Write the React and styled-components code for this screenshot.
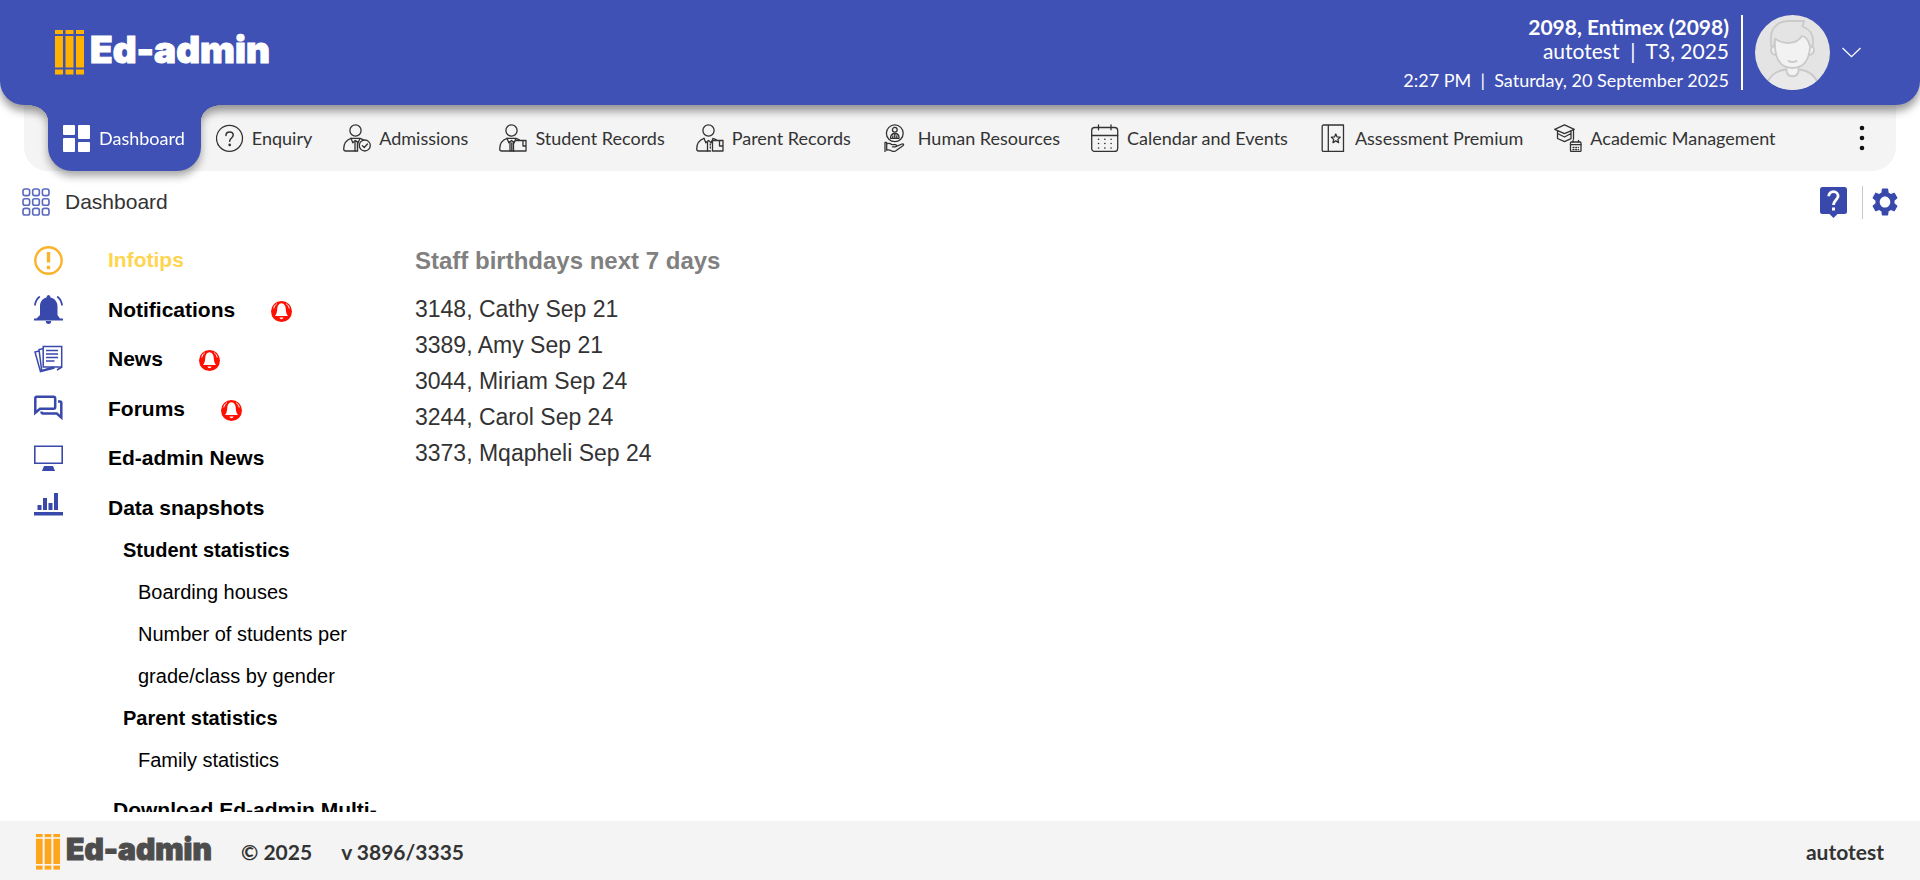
import React from 'react';
import styled, { createGlobalStyle, css } from 'styled-components';

const blue = '#3f51b5';
const ink = '#333333';
const panel = '#f4f4f4';

const GlobalStyle = createGlobalStyle`
  *, *::before, *::after { box-sizing: border-box; }
  body {
    margin: 0;
    background: #ffffff;
    color: ${ink};
    font-family: 'Liberation Sans', Arial, sans-serif;
  }
  a { color: inherit; text-decoration: none; }
  ul { list-style: none; margin: 0; padding: 0; }
`;

const Page = styled.div`
  display: flex;
  flex-direction: column;
  height: 100vh;
  overflow: hidden;
`;

const PlainButton = styled.button`
  display: flex;
  align-items: center;
  justify-content: center;
  padding: 0;
  border: 0;
  background: none;
  color: inherit;
  cursor: pointer;
`;

/* Header */

const Header = styled.header`
  position: relative;
  z-index: 2;
  flex: none;
  display: flex;
  align-items: center;
  justify-content: space-between;
  padding: 15px 59px 15px 55px;
  border-radius: 0 0 24px 24px;
  background: ${blue};
  color: #ffffff;
  font-family: Lato, sans-serif;
  box-shadow: 0 6px 9px rgba(0, 0, 0, 0.4);
`;

const Brand = styled.a`
  display: flex;
  align-items: center;
  gap: 6px;
  font: 900 ${(p) => (p.$small ? 30 : 37)}px / 1 Inter, sans-serif;
  color: ${(p) => (p.$small ? '#4d4d4d' : '#ffffff')};
`;

const BrandName = styled.span`
  padding-bottom: 6px;
  -webkit-text-stroke: 1px currentColor;
`;

const Account = styled.div`
  display: flex;
  align-items: center;
`;

const AccountText = styled.div`
  display: flex;
  flex-direction: column;
  align-items: flex-end;
  padding-right: 12px;
  margin-right: 12px;
  border-right: 2px solid #ffffff;
  height: 75px;
`;

const AccountLine = styled.div`
  font-size: ${(p) => (p.$minor ? 18 : 21)}px;
  font-weight: ${(p) => (p.$strong ? 700 : 400)};
  line-height: ${(p) => (p.$minor ? 35 : 24)}px;
  white-space: pre;
`;

const AvatarButton = styled(PlainButton)`
  gap: 12px;
`;

/* Navigation */

const Nav = styled.nav`
  flex: none;
  display: flex;
  align-items: stretch;
  justify-content: space-between;
  height: 66px;
  margin: 0 24px;
  padding: 0 24px;
  border-radius: 0 0 24px 24px;
  background: ${panel};
  font-family: Lato, sans-serif;
`;

const Tabs = styled.ul`
  display: flex;
`;

const activeTab = css`
  position: relative;
  z-index: 3;
  border-radius: 0 0 24px 24px;
  background: ${blue};
  color: #ffffff;
  filter: drop-shadow(0 5px 4px rgba(0, 0, 0, 0.35));
  clip-path: inset(0 -40px -24px -40px);

  &::before, &::after {
    content: '';
    position: absolute;
    top: 0;
    width: 20px;
    height: 15px;
  }
  &::before {
    right: 100%;
    background: radial-gradient(ellipse 20px 15px at 0 100%, transparent 98%, ${blue});
  }
  &::after {
    left: 100%;
    background: radial-gradient(ellipse 20px 15px at 100% 100%, transparent 98%, ${blue});
  }
`;

const Tab = styled.a`
  display: flex;
  align-items: center;
  gap: 8px;
  height: 100%;
  padding: 0 16px 0 15px;
  font-size: 18px;
  line-height: 24px;
  white-space: nowrap;
  ${(p) => p.$active && activeTab}
`;

const MoreButton = styled(PlainButton)`
  width: 20px;
  color: #111111;
`;

/* Breadcrumb */

const Toolbar = styled.div`
  flex: none;
  display: flex;
  align-items: center;
  justify-content: space-between;
  height: 62px;
  padding: 0 22px;
`;

const Title = styled.h1`
  display: flex;
  align-items: center;
  gap: 15px;
  margin: 0;
  font-size: 21px;
  line-height: 24px;
  font-weight: 400;
`;

const Tools = styled.div`
  display: flex;
  align-items: center;
  color: #3949ab;
`;

const ToolDivider = styled.span`
  width: 1px;
  height: 33px;
  margin: 0 9px 0 15px;
  background: #c8c8c8;
`;

/* Body */

const Body = styled.div`
  flex: 1;
  min-height: 0;
  display: flex;
  align-items: flex-start;
  gap: 15px;
  padding: 6px 24px 0;
  margin-bottom: 9px;
  overflow: hidden;
`;

const Sidebar = styled.nav`
  flex: none;
  width: 376px;
  color: #000000;
`;

const Topics = styled.ul`
  display: flex;
  flex-direction: column;
  justify-content: space-between;
  min-height: 290px;
`;

const Topic = styled.a`
  display: flex;
  align-items: center;
  height: 42px;
  padding-left: 10px;
  font-size: 21px;
  font-weight: 700;
  color: ${(p) => (p.$current ? '#ffd54f' : 'inherit')};
`;

const TopicIcon = styled.span`
  display: flex;
  width: 74px;
  color: ${(p) => (p.$current ? '#fbb32b' : '#3949ab')};
`;

const Alert = styled.span`
  display: flex;
  padding-top: 3px;
  margin-left: 36px;
`;

const SubTopics = styled.ul`
  padding-left: 99px;
  font-size: 20px;
  line-height: 42px;
`;

const SubHeading = styled.a`
  display: block;
  font-weight: 700;
`;

const SubLink = styled.a`
  display: block;
  max-width: 240px;
  padding-left: 15px;
`;

const Download = styled.a`
  display: block;
  margin-top: 8px;
  padding-left: 89px;
  font-size: 21px;
  font-weight: 700;
  line-height: 42px;
`;

const Content = styled.main`
  flex: 1;
`;

const SectionTitle = styled.h2`
  margin: 0 0 8px;
  font-size: 24px;
  line-height: 44px;
  color: #808080;
`;

const Birthday = styled.li`
  font-size: 23px;
  line-height: 36px;
`;

/* Footer */

const Footer = styled.footer`
  flex: none;
  display: flex;
  align-items: center;
  height: 59px;
  padding: 2px 36px 0;
  background: ${panel};
  font: 700 21px / 24px Lato, sans-serif;
`;

const FooterBrand = styled.div`
  width: 176px;
  margin-right: 29px;
`;

const Version = styled.span`
  margin-left: 29px;
  margin-right: auto;
`;

/* Drawings */

function Bars({ width, height, color }) {
  return (
    <svg width={width} height={height} viewBox="0 0 29 45" preserveAspectRatio="none" fill={color} aria-hidden="true">
      {[0, 10.5, 21].map((x) => (
        <g key={x}>
          <rect x={x} y="0" width="8" height="4" />
          <rect x={x} y="6" width="8" height="31.500" />
          <rect x={x} y="39.500" width="8" height="5" />
        </g>
      ))}
    </svg>
  );
}

function LineIcon({ children }) {
  return (
    <svg width="28" height="28" viewBox="0 0 28 28" fill="none" stroke="currentColor" strokeWidth="1.300" strokeLinecap="round" strokeLinejoin="round" aria-hidden="true">
      {children}
    </svg>
  );
}

function DashboardIcon() {
  return (
    <svg width="28" height="28" viewBox="0 0 28 28" fill="currentColor" aria-hidden="true">
      <rect x="0" y="1" width="12" height="10" rx="1" />
      <rect x="0" y="14" width="12" height="14" rx="1" />
      <rect x="15" y="1" width="12" height="14" rx="1" />
      <rect x="15" y="18" width="12" height="10" rx="1" />
    </svg>
  );
}

function EnquiryIcon() {
  return (
    <LineIcon>
      <circle cx="13.500" cy="14.300" r="13" />
      <path d="M10 11.500c0-2 1.500-3.400 3.600-3.400s3.600 1.400 3.600 3.200c0 2.600-3.500 2.900-3.500 5.900" strokeWidth="1.500" />
      <circle cx="13.700" cy="20.900" r="0.700" fill="currentColor" />
    </LineIcon>
  );
}

function PersonTop() {
  return (
    <>
      <circle cx="12.500" cy="6.500" r="5.600" />
      <path d="M8 14.300C3.500 15.800.8 20 .7 24.800c0 1.500.6 2.200 2 2.200h12" />
      <path d="M17 14.300c1.500.4 2.600 1 3.500 1.700M8 14.300l1.800 4.500 2.700-2.400 2.700 2.400 1.800-4.500" />
    </>
  );
}

function AdmissionsIcon() {
  return (
    <LineIcon>
      <PersonTop />
      <path d="M8 14.300h9M12 17v10M14.500 18v8.500" />
      <path d="M14.500 20v6" strokeDasharray="1 2" />
      <circle cx="21.800" cy="21.500" r="5.500" />
      <path d="M19.300 21.600l1.900 1.900 3.300-3.500" />
    </LineIcon>
  );
}

function StudentIcon() {
  return (
    <LineIcon>
      <PersonTop />
      <path d="M8 14.300h9M11 18v9M14.500 18v9M12.800 19v8" />
      <path d="M16.500 16.500H27V27H14.500M24 16.500v5.500h3" />
    </LineIcon>
  );
}

function ParentIcon() {
  return (
    <LineIcon>
      <PersonTop />
      <path d="M11.500 18v9" />
      <path d="M14.300 20v6" strokeDasharray="1 2" />
      <path d="M16.500 16.500H27V27H16.500zM23.500 16.500v5.500H27" />
    </LineIcon>
  );
}

function HumanResourcesIcon() {
  return (
    <LineIcon>
      <g transform="translate(2.500 0.300)">
        <circle cx="10.300" cy="9" r="8.400" />
        <circle cx="10.300" cy="5.500" r="2.400" />
        <path d="M6 14c0-3 1.500-4.800 4.300-4.800s4.300 1.800 4.300 4.800zM10.300 9.500V14M8.300 11.500v2M12.300 11.500v2" />
        <path d="M.5 18v9.500M2.200 18.500v7.500M.5 18h1.700M2.200 19.500c2-.9 3.600-.4 5 .8h3.800c1.300 0 1.300 2.300 0 2.300H8M11.300 22.300l6.200-2.600c1.600-.4 2 .8.900 1.700L11 26.700c-1.500.8-2.900.5-4.200-.3-1.500-.8-2.900-.9-4.600-.6" />
      </g>
    </LineIcon>
  );
}

function CalendarIcon() {
  return (
    <LineIcon>
      <rect x="0.700" y="3.500" width="26" height="24" rx="3" />
      <path d="M.7 11.500h26M7.500.8v5M20 .8v5" />
      <path d="M7.500 15.200h12.600M7.500 19.500h12.600M7.500 24h12.600" strokeWidth="1.600" strokeDasharray="0.100 6.200" />
    </LineIcon>
  );
}

function AssessmentIcon() {
  return (
    <LineIcon>
      <path d="M4.500 1h20v26.500h-20c-.8 0-1.300-.6-1.300-1.300V2.300C3.200 1.600 3.700 1 4.500 1zM9.300 1v26.500" />
      <path d="M16.800 10l1.300 2.900 3.100.3-2.300 2.200.7 3.200-2.800-1.700-2.800 1.700.7-3.200-2.300-2.200 3.100-.3z" />
    </LineIcon>
  );
}

function AcademicIcon() {
  return (
    <LineIcon>
      <path d="M.7 5.300L10.500.8l9.800 4.500-9.800 4.300zM3.500 7.300v7.200l7 3.200 6.500-3V7.300M3.500 9.500l7 3.500 6.500-3.500M19.500 5.800v9.500" />
      <rect x="16.500" y="18" width="10.500" height="9.500" rx="1" />
      <path d="M16.500 20.700H27M19 16.500V18M24.500 16.500V18" />
      <path d="M19 23.300h5.500M19 25.500h5.500" strokeDasharray="1 1.700" />
    </LineIcon>
  );
}

function Avatar() {
  return (
    <svg width="75" height="75" viewBox="0 0 75 75" fill="none" stroke="#cacaca" strokeWidth="1.800" strokeLinejoin="round" aria-hidden="true">
      <defs>
        <clipPath id="avatar-disc"><circle cx="37.500" cy="37.500" r="37.500" /></clipPath>
      </defs>
      <circle cx="37.500" cy="37.500" r="37.500" fill="#e4e4e4" stroke="none" />
      <g clipPath="url(#avatar-disc)">
        <path d="M12 68c4-9 11-13 20-13.500h11c9 .5 16 4.500 20 13.500v10H12z" fill="#e9e9e9" />
        <path d="M31.500 50v6c1 7 11 7 12 0v-6" fill="#f2f2f2" />
        <path d="M20 31c-5-.5-6 8 1 9M55 31c5-.5 6 8-1 9" fill="#efefef" />
        <path d="M20 23c-1 17 3 30 17.500 30S56 40 55 23c-9-6-26-6-35 0z" fill="#f2f2f2" />
        <path d="M16.500 32c-3-17 4-25.500 17-26H49l-1.500 5.500c8 3 12.500 9 10 20.500l-3-2c-1-5-4-8-7.500-9-5 8-18 9.500-27 2.500-.7 3-.8 5.500-1 7.500z" fill="#e4e4e4" />
        <path d="M33 45.500c2 2 7 2 9 0" />
      </g>
    </svg>
  );
}

function Chevron() {
  return (
    <svg width="19" height="11" viewBox="0 0 19 11" fill="none" stroke="#ffffff" strokeWidth="1.300" aria-hidden="true">
      <path d="M.5 1l9 8.700 9-8.700" />
    </svg>
  );
}

function MoreIcon() {
  return (
    <svg width="6" height="26" viewBox="0 0 6 26" fill="currentColor" aria-hidden="true">
      <circle cx="3" cy="3" r="2.300" />
      <circle cx="3" cy="13" r="2.300" />
      <circle cx="3" cy="23" r="2.300" />
    </svg>
  );
}

function GridIcon() {
  const cells = [1, 10.5, 20];
  return (
    <svg width="28" height="28" viewBox="0 0 27.500 27.500" fill="none" stroke="#5b69c0" strokeWidth="1.600" aria-hidden="true">
      {cells.map((y) => cells.map((x) => <rect key={`${x}-${y}`} x={x} y={y} width="6.500" height="6.500" rx="2" />))}
    </svg>
  );
}

function HelpIcon() {
  return (
    <svg width="27" height="31" viewBox="0 0 27 31" aria-hidden="true">
      <path d="M2.500 0h22A2.500 2.500 0 0 1 27 2.500v22a2.500 2.500 0 0 1-2.500 2.500h-7l-4 4-4-4h-7A2.500 2.500 0 0 1 0 24.500v-22A2.500 2.500 0 0 1 2.500 0z" fill="currentColor" />
      <path d="M8.700 9.300c0-2.800 2-4.600 4.700-4.600s4.700 1.800 4.700 4.400c0 3.800-4.600 4.300-4.600 8.900" fill="none" stroke="#fff" strokeWidth="2.800" />
      <rect x="12" y="20.500" width="3" height="3" fill="#fff" />
    </svg>
  );
}

function GearIcon() {
  return (
    <svg width="26" height="28" viewBox="2.200 2 19.600 20" preserveAspectRatio="none" fill="currentColor" aria-hidden="true">
      <path d="M19.140 12.940c.04-.3.060-.61.060-.94s-.02-.64-.07-.94l2.030-1.580c.18-.14.23-.41.120-.61l-1.920-3.320c-.12-.22-.37-.29-.59-.22l-2.390.96c-.5-.38-1.030-.7-1.620-.94L14.400 2.810c-.04-.24-.24-.41-.48-.41h-3.840c-.24 0-.43.170-.47.41l-.36 2.540c-.59.240-1.130.570-1.620.94l-2.390-.96c-.22-.08-.47 0-.59.220L2.740 8.870c-.12.210-.08.470.120.610l2.030 1.580c-.05.300-.09.630-.09.940s.02.640.07.940l-2.030 1.580c-.18.140-.23.410-.12.610l1.920 3.320c.12.220.37.290.59.220l2.390-.96c.5.380 1.030.700 1.620.94l.36 2.540c.05.240.24.410.48.410h3.840c.24 0 .44-.17.47-.41l.36-2.540c.59-.24 1.130-.56 1.620-.94l2.390.96c.22.080.47 0 .59-.22l1.920-3.320c.12-.22.070-.47-.12-.61l-2.010-1.580zM12 16.000c-2.200 0-4.000-1.800-4.000-4.000s1.800-4.000 4.000-4.000 4.000 1.800 4.000 4.000-1.800 4.000-4.000 4.000z" />
    </svg>
  );
}

function TopicSvg({ children }) {
  return (
    <svg width="29" height="29" viewBox="0 0 29 29" fill="none" stroke="currentColor" strokeWidth="2" aria-hidden="true">
      {children}
    </svg>
  );
}

const topicIcons = {
  info: (
    <TopicSvg>
      <circle cx="14.500" cy="14.500" r="13.200" strokeWidth="2.400" />
      <path d="M14.500 6v10.500M14.500 19.700v3.500" strokeWidth="3.400" />
    </TopicSvg>
  ),
  bell: (
    <TopicSvg>
      <g fill="currentColor" stroke="none">
        <path d="M12.500 2.500a2 2.500 0 0 1 4 0c4.500 1 7 4.500 7 9V20l2.500 3.500h3v2H0v-2h2.500L6 20v-8.500c0-4.500 2.300-8 6.500-9z" />
        <path d="M11.800 26h5.400a2.700 3 0 0 1-5.400 0z" />
      </g>
      <path d="M5.800 1.500C3 3.700 1.200 6.600 1 10.500M23.200 1.500c2.800 2.200 4.600 5.100 4.800 9" strokeWidth="1.700" />
    </TopicSvg>
  ),
  news: (
    <TopicSvg>
      <g strokeWidth="1.500">
        <path d="M9.200 1.500h18.500V22H9.200z" />
        <path d="M9 3.700l-4 .8 2.700 21 12-3.500M5 6l-4 1 5.500 19.700L20.500 23M23 25l5-3" />
        <path d="M12 5.500h12M12 9h12M12 12.500h12M12 16h8.500" />
      </g>
    </TopicSvg>
  ),
  forums: (
    <TopicSvg>
      <path d="M2.500 2.800h17c1.200 0 1.700.6 1.700 1.700V13c0 1.200-.6 1.800-1.700 1.800H6l-4.700 4V4.500c0-1.100.4-1.700 1.200-1.700z" strokeWidth="2.500" />
      <path d="M24 7.500h2c1 0 1.300.5 1.300 1.400v14.600l-4.500-4H9c-1 0-1.500-.6-1.500-2" strokeWidth="2.500" />
    </TopicSvg>
  ),
  monitor: (
    <TopicSvg>
      <path d="M.8 2.300h27.400v17H.8z" strokeWidth="1.600" />
      <path d="M10 22h9l2 5H8z" fill="currentColor" stroke="none" />
    </TopicSvg>
  ),
  chart: (
    <TopicSvg>
      <g fill="currentColor" stroke="none">
        <path d="M0 19h29v3.500H0zM3.500 12h4v5h-4zM9 5h4v12H9zM14.500 10h4v7h-4zM20 0h4v17h-4z" />
      </g>
    </TopicSvg>
  ),
};

function AlertIcon() {
  return (
    <svg width="21" height="21" viewBox="0 0 21 21" role="img" aria-label="New items">
      <circle cx="10.500" cy="10.500" r="10.500" fill="#ff0f00" />
      <path d="M10.500 2.300c2.700.4 4 2.500 4.200 5.200.2 3.500.7 5.300 2.300 7.500H4c1.600-2.200 2.100-4 2.300-7.500.2-2.700 1.500-4.800 4.200-5.200zM8.500 16.500h4c-.5 2.300-3.500 2.300-4 0z" fill="#fff" />
      <path d="M5.800 2.800C4 4 3 5.500 2.800 7.500M15.200 2.800C17 4 18 5.500 18.200 7.500" fill="none" stroke="#fff" strokeWidth="1" />
    </svg>
  );
}

/* Data */

const tabs = [
  ['Dashboard', DashboardIcon],
  ['Enquiry', EnquiryIcon],
  ['Admissions', AdmissionsIcon],
  ['Student Records', StudentIcon],
  ['Parent Records', ParentIcon],
  ['Human Resources', HumanResourcesIcon],
  ['Calendar and Events', CalendarIcon],
  ['Assessment Premium', AssessmentIcon],
  ['Academic Management', AcademicIcon],
];

const topics = [
  { label: 'Infotips', icon: 'info', current: true },
  { label: 'Notifications', icon: 'bell', alert: true },
  { label: 'News', icon: 'news', alert: true },
  { label: 'Forums', icon: 'forums', alert: true },
  { label: 'Ed-admin News', icon: 'monitor' },
  { label: 'Data snapshots', icon: 'chart' },
];

const statistics = [
  { label: 'Student statistics', links: ['Boarding houses', 'Number of students per grade/class by gender'] },
  { label: 'Parent statistics', links: ['Family statistics'] },
];

const birthdays = [
  '3148, Cathy Sep 21',
  '3389, Amy Sep 21',
  '3044, Miriam Sep 24',
  '3244, Carol Sep 24',
  '3373, Mqapheli Sep 24',
];

export default function App() {
  return (
    <Page>
      <GlobalStyle />
      <Header>
        <Brand href="#">
          <Bars width={29} height={45} color="#ffb300" />
          <BrandName>Ed-admin</BrandName>
        </Brand>
        <Account>
          <AccountText>
            <AccountLine $strong>2098, Entimex (2098)</AccountLine>
            <AccountLine>{'autotest  |  T3, 2025'}</AccountLine>
            <AccountLine $minor>{'2:27 PM  |  Saturday, 20 September 2025'}</AccountLine>
          </AccountText>
          <AvatarButton type="button" aria-label="Account menu">
            <Avatar />
            <Chevron />
          </AvatarButton>
        </Account>
      </Header>

      <Nav aria-label="Modules">
        <Tabs>
          {tabs.map(([label, Icon], i) => (
            <li key={label}>
              <Tab href="#" $active={i === 0} aria-current={i === 0 ? 'page' : undefined}>
                <Icon />
                {label}
              </Tab>
            </li>
          ))}
        </Tabs>
        <MoreButton type="button" aria-label="More modules">
          <MoreIcon />
        </MoreButton>
      </Nav>

      <Toolbar>
        <Title>
          <GridIcon />
          Dashboard
        </Title>
        <Tools>
          <PlainButton type="button" aria-label="Help"><HelpIcon /></PlainButton>
          <ToolDivider />
          <PlainButton type="button" aria-label="Settings"><GearIcon /></PlainButton>
        </Tools>
      </Toolbar>

      <Body>
        <Sidebar aria-label="Dashboard topics">
          <Topics>
            {topics.map(({ label, icon, alert, current }) => (
              <li key={label}>
                <Topic href="#" $current={current}>
                  <TopicIcon $current={current}>{topicIcons[icon]}</TopicIcon>
                  {label}
                  {alert && <Alert><AlertIcon /></Alert>}
                </Topic>
              </li>
            ))}
          </Topics>
          <SubTopics>
            {statistics.map(({ label, links }) => (
              <li key={label}>
                <SubHeading href="#">{label}</SubHeading>
                {links.map((link) => <SubLink href="#" key={link}>{link}</SubLink>)}
              </li>
            ))}
          </SubTopics>
          <Download href="#">Download Ed-admin Multi-</Download>
        </Sidebar>
        <Content>
          <SectionTitle>Staff birthdays next 7 days</SectionTitle>
          <ul>
            {birthdays.map((entry) => <Birthday key={entry}>{entry}</Birthday>)}
          </ul>
        </Content>
      </Body>

      <Footer>
        <FooterBrand>
          <Brand href="#" $small>
            <Bars width={24} height={36} color="#ffa51a" />
            <BrandName>Ed-admin</BrandName>
          </Brand>
        </FooterBrand>
        <span>© 2025</span>
        <Version>v 3896/3335</Version>
        <span>autotest</span>
      </Footer>
    </Page>
  );
}
